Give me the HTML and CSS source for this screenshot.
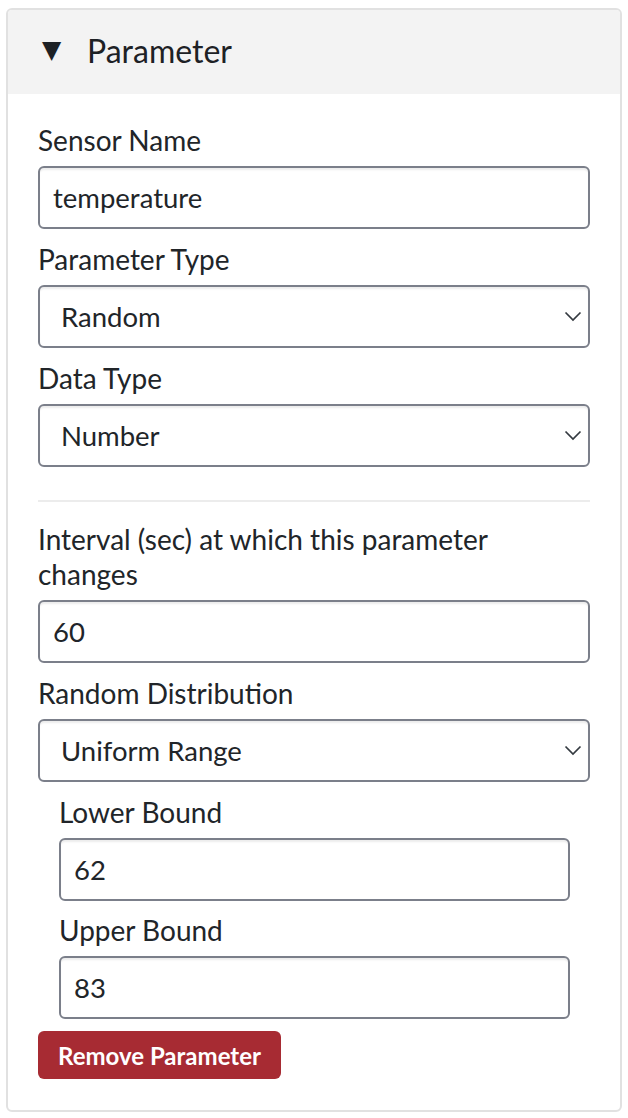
FILE: index.html
```html
<!DOCTYPE html>
<html>
<head>
<meta charset="utf-8">
<link rel="stylesheet" href="styles.css">
</head>
<body>
<div class="page">
  <div class="card">
    <div class="card-header"><span class="caret">&#9660;</span><span class="title">Parameter</span></div>
    <div class="card-body">
      <div class="group">
        <label class="lbl">Sensor Name</label>
        <input class="ctl" type="text" value="temperature">
      </div>
      <div class="group">
        <label class="lbl">Parameter Type</label>
        <div class="sel-wrap">
          <select class="ctl sel"><option>Random</option></select>
          <svg class="chev" width="18" height="11" viewBox="0 0 18 11"><path d="M1.5 1.5 L9 9 L16.5 1.5" fill="none" stroke="#343a40" stroke-width="1.7"/></svg>
        </div>
      </div>
      <div class="group">
        <label class="lbl">Data Type</label>
        <div class="sel-wrap">
          <select class="ctl sel"><option>Number</option></select>
          <svg class="chev" width="18" height="11" viewBox="0 0 18 11"><path d="M1.5 1.5 L9 9 L16.5 1.5" fill="none" stroke="#343a40" stroke-width="1.7"/></svg>
        </div>
      </div>
      <hr class="sep">
      <div class="group">
        <label class="lbl">Interval (sec) at which this parameter changes</label>
        <input class="ctl" type="text" value="60">
      </div>
      <div class="group">
        <label class="lbl">Random Distribution</label>
        <div class="sel-wrap">
          <select class="ctl sel"><option>Uniform Range</option></select>
          <svg class="chev" width="18" height="11" viewBox="0 0 18 11"><path d="M1.5 1.5 L9 9 L16.5 1.5" fill="none" stroke="#343a40" stroke-width="1.7"/></svg>
        </div>
      </div>
      <div class="nested">
        <div class="group">
          <label class="lbl">Lower Bound</label>
          <input class="ctl" type="text" value="62">
        </div>
        <div class="group">
          <label class="lbl">Upper Bound</label>
          <input class="ctl" type="text" value="83">
        </div>
      </div>
      <button class="btn-remove">Remove Parameter</button>
    </div>
  </div>
</div>
</body>
</html>
```

FILE: styles.css
```css
* { box-sizing: border-box; }
html, body { margin: 0; padding: 0; background: #fff; }
body { font-family: Lato, "Noto Sans", sans-serif; color: #212529; }
.page { padding: 8px 6px 6px 6px; }
.card {
  border: 2px solid #e1e1e1;
  border-radius: 6px;
  overflow: hidden;
  width: 616px;
}
.card-header {
  background: #f3f3f3;
  height: 84px;
  display: flex;
  align-items: center;
  padding-left: 34px;
  padding-bottom: 4px;
  color: #1d2125;
}
.caret {
  font-family: "DejaVu Sans", sans-serif;
  font-size: 25px;
  width: 45px;
  display: inline-block;
  position: relative;
  top: -1px;
}
.title { font-size: 32px; }
.card-body { padding: 29px 30px 31px 30px; }
.group { margin-bottom: 13px; }
.lbl {
  display: block;
  font-size: 28px;
  line-height: 35px;
  margin-bottom: 8px;
  color: #212529;
}
.ctl {
  display: block;
  width: 100%;
  height: 63px;
  border: 2px solid #7b7f8a;
  border-radius: 6px;
  background: #fff;
  box-shadow: inset 0 3px 2px -1px rgba(0,0,0,0.08);
  font-family: Lato, "Noto Sans", sans-serif;
  font-size: 27.5px;
  color: #212529;
  padding: 0 13px;
  outline: none;
}
.sel-wrap { position: relative; }
.sel {
  -webkit-appearance: none;
  appearance: none;
  padding-left: 21px;
}
.chev { position: absolute; right: 8px; top: 26px; }
.sep {
  border: 0;
  border-top: 2px solid #ececec;
  margin: 33px 0 20px 0;
}
.nested { padding: 0 20px 0 21px; }
.nested .group { margin-bottom: 12px; }
.btn-remove {
  display: block;
  background: #a72b33;
  color: #fff;
  border: 0;
  border-radius: 6px;
  height: 48px;
  padding: 0 20px;
  font-family: Lato, "Noto Sans", sans-serif;
  font-weight: 700;
  font-size: 24px;
  margin-top: 1px;
}
```
